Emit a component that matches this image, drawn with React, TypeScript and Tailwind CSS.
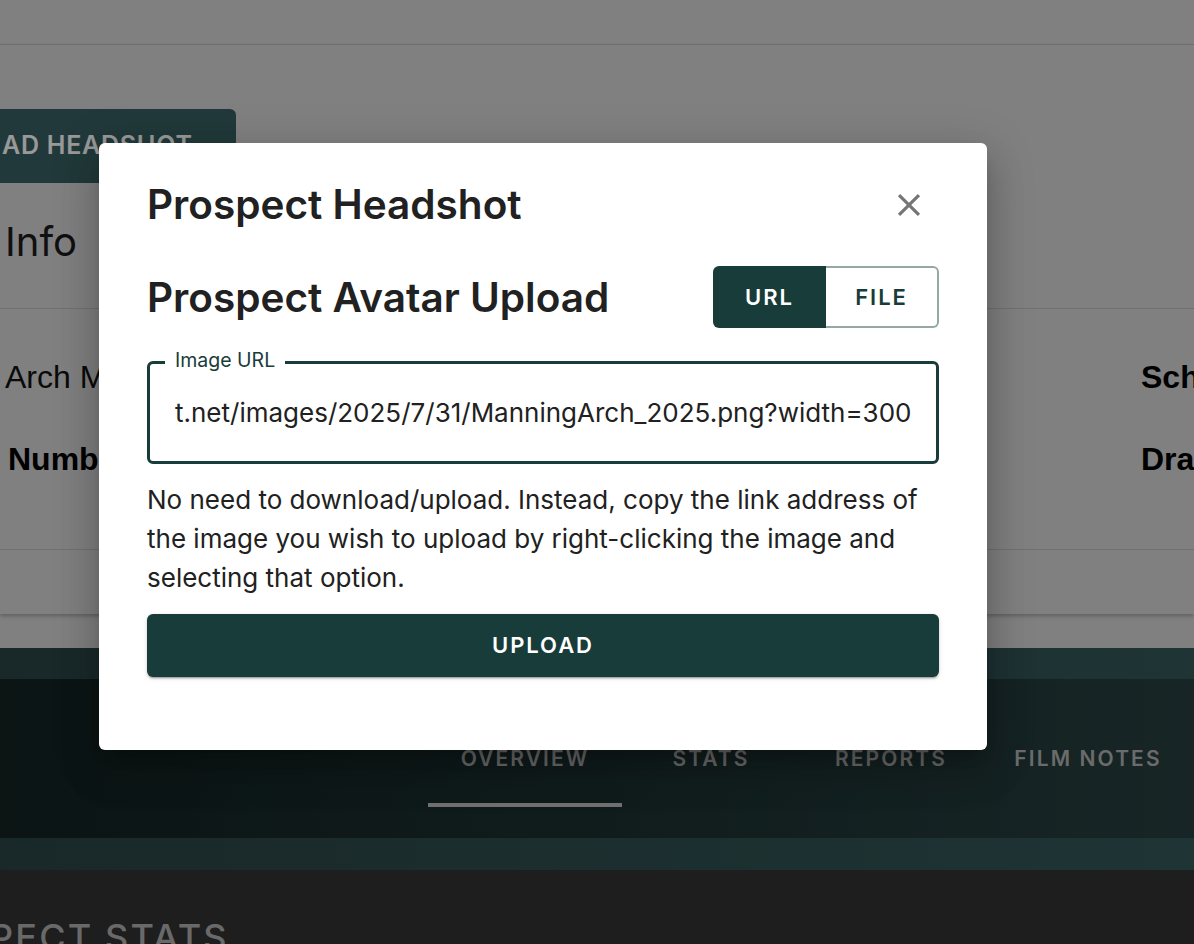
import { useState } from 'react';

const tabs = [
  { label: 'OVERVIEW', width: 'w-[194px]' },
  { label: 'STATS', width: 'w-[178px]' },
  { label: 'REPORTS', width: 'w-[182px]' },
  { label: 'FILM NOTES', width: 'w-[212px]' },
];

function CloseIcon() {
  return (
    <svg viewBox="0 0 24 24" className="h-[38px] w-[38px] fill-[#757575]">
      <path d="M19 6.41 17.59 5 12 10.59 6.41 5 5 6.41 10.59 12 5 17.59 6.41 19 12 13.41 17.59 19 19 17.59 13.41 12z" />
    </svg>
  );
}

export default function App() {
  const [mode, setMode] = useState<'url' | 'file'>('url');
  const [url, setUrl] = useState('t.net/images/2025/7/31/ManningArch_2025.png?width=300');

  return (
    <div className="relative h-[944px] w-full overflow-hidden bg-[#d5d5d5] font-['Inter',sans-serif]">
      {/* Page behind the dialog */}
      <div className="h-[45px] border-b border-[#bcbcbc]" />

      <div className="shadow-[0_2px_4px_rgba(0,0,0,0.25)]">
        <div className="pt-[64px]">
          <button className="flex h-[74px] w-[236px] items-center rounded-r-[6px] bg-[#375f61] pl-[2px] text-[25px] font-semibold tracking-[0.03em] text-white">
            AD HEADSHOT
          </button>
        </div>

        <h2 className="mt-[35px] pl-[5px] text-[40px] leading-[48px] text-[#1c1c1c]">Info</h2>

        <div className="mt-[42px] h-px bg-[#bdbdbd]" />

        <div className="flex pt-[48px] pb-[70px] font-['Liberation_Sans',sans-serif] text-[32px] leading-[40px]">
          <div className="flex w-[1141px] shrink-0 flex-col gap-[42px]">
            <span className="pl-[5px] text-[#111]">Arch Manning</span>
            <span className="pl-[8px] font-bold text-black">Number</span>
          </div>
          <div className="flex flex-col gap-[42px] whitespace-nowrap font-bold text-black">
            <span>Sch</span>
            <span>Dra</span>
          </div>
        </div>

        <div className="h-px bg-[#bdbdbd]" />
        <div className="h-[64px]" />
      </div>

      <div className="h-[34px]" />

      <div className="bg-gradient-to-r from-[#2b4444] to-[#345759] pt-[31px] pb-[32px]">
        <div className="flex h-[159px] bg-gradient-to-r from-[#142222] via-[#1c3030] to-[#283f40] pl-[428px]">
          {tabs.map((t, i) => (
            <div key={t.label} className={`${t.width} flex shrink-0 flex-col items-center pt-[68px]`}>
              <span className="text-[21px] font-semibold leading-[24px] tracking-[0.1em] text-[#b3b3b3]">
                {t.label}
              </span>
              {i === 0 && <div className="mt-[32px] h-[4px] w-full bg-[#bdbdbd]" />}
            </div>
          ))}
        </div>
      </div>

      <div className="h-[200px] bg-[#323232] pt-[45px]">
        <h3 className="-ml-[10px] whitespace-nowrap text-[36px] font-medium leading-[44px] tracking-[0.06em] text-[#b0b0b0]">
          PECT STATS
        </h3>
      </div>

      {/* Backdrop */}
      <div className="absolute inset-0 bg-black/40" />

      {/* Dialog */}
      <div
        role="dialog"
        className="absolute left-[99px] top-[143px] w-[888px] rounded-[6px] bg-white px-12 pt-10 pb-[73px] text-[#212121] shadow-[0_11px_15px_-7px_rgba(0,0,0,0.2),0_24px_38px_3px_rgba(0,0,0,0.14),0_9px_46px_8px_rgba(0,0,0,0.12)]"
      >
        <div className="flex h-[43px] items-center justify-between">
          <h2 className="text-[40.5px] font-semibold leading-[43px]">Prospect Headshot</h2>
          <button className="mr-[11px] flex items-center justify-center">
            <CloseIcon />
          </button>
        </div>

        <div className="mt-10 flex h-[62px] items-center justify-between">
          <h2 className="text-[40.5px] font-semibold leading-[43px]">Prospect Avatar Upload</h2>
          <div className="flex h-[62px] w-[226px] text-[22px] font-semibold tracking-[0.09em]">
            <button
              onClick={() => setMode('url')}
              className={`w-[113px] rounded-l-[6px] ${mode === 'url' ? 'bg-[#183c39] text-white' : 'border-2 border-r-0 border-[#95a8a6] text-[#183c39]'}`}
            >
              URL
            </button>
            <button
              onClick={() => setMode('file')}
              className={`w-[113px] rounded-r-[6px] ${mode === 'file' ? 'bg-[#183c39] text-white' : 'border-2 border-l-0 border-[#95a8a6] text-[#183c39]'}`}
            >
              FILE
            </button>
          </div>
        </div>

        <div className="relative mt-[33px] flex h-[103px] items-center rounded-[6px] border-[3px] border-[#183c39] pl-[25px] pr-[20px]">
          <span className="absolute -top-[15px] left-[15px] bg-white px-[10px] text-[19.5px] leading-[22px] text-[#183c39]">
            Image URL
          </span>
          <input
            value={url}
            onChange={(e) => setUrl(e.target.value)}
            className="w-full bg-transparent text-[26px] leading-[32px] text-[#212121] outline-none"
          />
        </div>

        <p className="mt-4 text-[26px] leading-[39px] text-[#212121]">
          No need to download/upload. Instead, copy the link address of the image you wish to upload by
          right-clicking the image and selecting that option.
        </p>

        <button className="mt-[17px] flex h-[63px] w-full items-center justify-center rounded-[6px] bg-[#183c39] text-[22px] font-semibold tracking-[0.09em] text-white shadow-[0_3px_1px_-2px_rgba(0,0,0,0.2),0_2px_2px_0_rgba(0,0,0,0.14),0_1px_5px_0_rgba(0,0,0,0.12)]">
          UPLOAD
        </button>
      </div>
    </div>
  );
}
